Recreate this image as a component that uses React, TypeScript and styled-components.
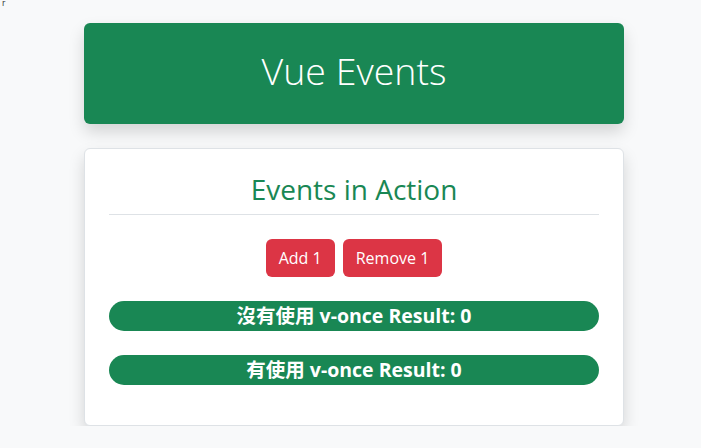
import React from "react";
import styled, { createGlobalStyle } from "styled-components";

const Global = createGlobalStyle`
  html, body { margin: 0; padding: 0; }
  body {
    background: #f8f9fa;
    font-family: "Open Sans", "Noto Sans CJK TC", sans-serif;
    color: #212529;
  }
`;

const Stray = styled.div`
  position: absolute;
  top: 0;
  left: 2px;
  font-family: "DejaVu Sans", sans-serif;
  font-size: 8px;
  line-height: 8px;
  color: #333;
`;

const Container = styled.div`
  width: 540px;
  margin: 23px 0 0 84px;
  display: flex;
  flex-direction: column;
  gap: 24px;
`;

const Header = styled.header`
  height: 101px;
  background: #198754;
  border-radius: 6px;
  box-shadow: 0 0.5rem 1rem rgba(0, 0, 0, 0.15);
  display: flex;
  align-items: center;
  justify-content: center;
  padding-bottom: 6px;
  box-sizing: border-box;
`;

const Title = styled.h1`
  margin: 0;
  color: #fff;
  font-family: "Open Sans", sans-serif;
  font-weight: 300;
  font-size: 37.5px;
  line-height: 1.2;
`;

const Card = styled.section`
  background: #fff;
  border: 1px solid #dee2e6;
  border-radius: 6px;
  box-shadow: 0 0.5rem 1rem rgba(0, 0, 0, 0.15);
  padding: 21px 24px 40px;
  display: flex;
  flex-direction: column;
`;

const CardTitle = styled.h2`
  margin: 0;
  padding-bottom: 5px;
  border-bottom: 1px solid #dee2e6;
  text-align: center;
  color: #198754;
  font-family: "Open Sans", sans-serif;
  font-weight: 400;
  font-size: 28px;
  line-height: 1.4;
`;

const ButtonRow = styled.div`
  display: flex;
  justify-content: center;
  gap: 8px;
  margin-top: 24px;
`;

const Button = styled.button`
  height: 38px;
  padding: 0 13px;
  border: none;
  border-radius: 6px;
  background: #dc3545;
  color: #fff;
  font-family: "Open Sans", sans-serif;
  font-size: 16px;
  cursor: pointer;
`;

const Bar = styled.div`
  margin-top: 24px;
  height: 30px;
  box-sizing: border-box;
  padding-bottom: 3px;
  border-radius: 15px;
  background: #198754;
  color: #fff;
  display: flex;
  align-items: center;
  justify-content: center;
  font-family: "Open Sans", "Noto Sans CJK TC", sans-serif;
  font-weight: 700;
  font-size: 19.5px;
`;

export default function App() {
  return (
    <>
      <Global />
      <Stray>r</Stray>
      <Container>
        <Header>
          <Title>Vue Events</Title>
        </Header>
        <Card>
          <CardTitle>Events in Action</CardTitle>
          <ButtonRow>
            <Button>Add 1</Button>
            <Button>Remove 1</Button>
          </ButtonRow>
          <Bar>沒有使用 v-once Result: 0</Bar>
          <Bar>有使用 v-once Result: 0</Bar>
        </Card>
      </Container>
    </>
  );
}
